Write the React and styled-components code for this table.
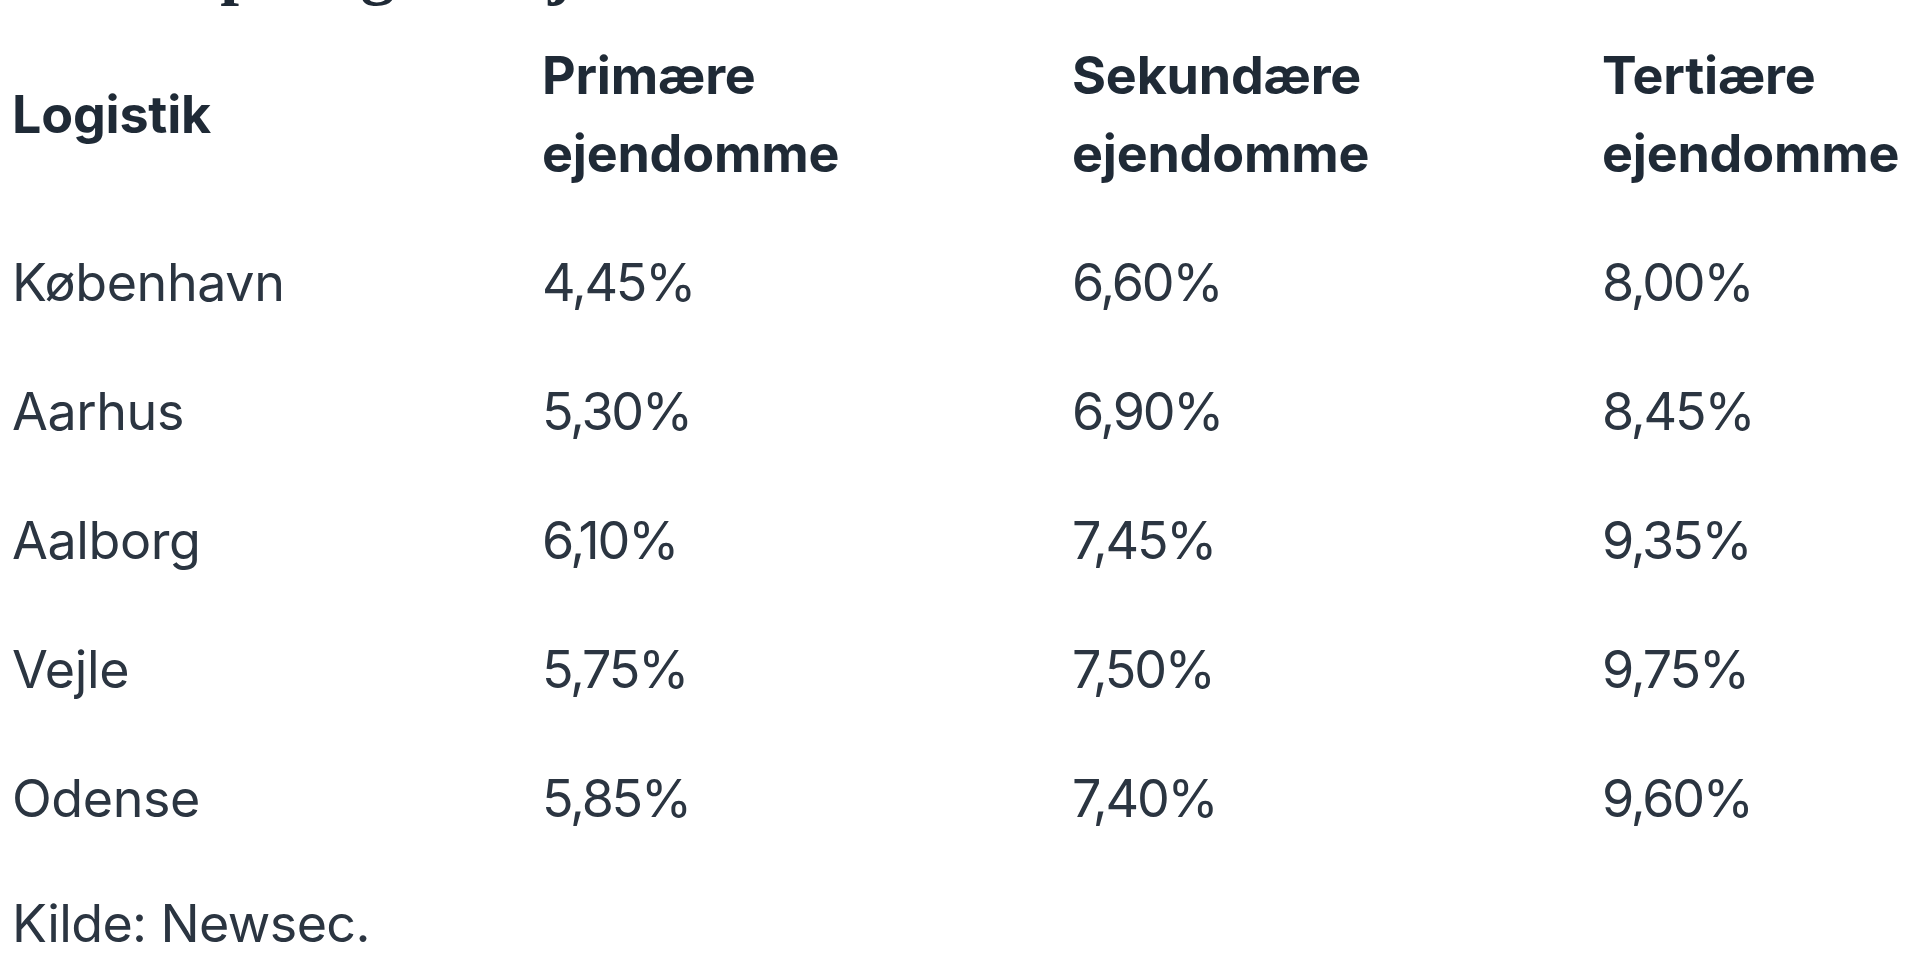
import React from 'react'
import styled, { createGlobalStyle } from 'styled-components'

const GlobalStyle = createGlobalStyle`
  html, body {
    margin: 0;
    padding: 0;
    background: #ffffff;
    overflow: hidden;
  }
`

const Page = styled.main`
  width: 1920px;
  height: 979px;
  overflow: hidden;
  font-family: Inter, 'Noto Sans', sans-serif;
  color: #2b3541;
`

const Heading = styled.h2`
  margin: -64px 0 7.5px 12px;
  font-family: 'Liberation Serif', 'Times New Roman', serif;
  font-weight: 700;
  font-size: 67.5px;
  line-height: 67.5px;
  color: #1f2a36;
  white-space: nowrap;
`

const Table = styled.table`
  border-collapse: collapse;
  table-layout: fixed;
  width: 2120px;
  font-size: 52px;
  line-height: 78px;

  col {
    width: 530px;
  }
`

const HeadCell = styled.th`
  padding: 25.5px 12px;
  text-align: left;
  vertical-align: middle;
  font-weight: 700;
  letter-spacing: -0.2px;
  color: #1f2a36;
`

const Cell = styled.td`
  padding: 25.5px 12px;
  text-align: left;
  vertical-align: middle;
  font-weight: 400;
  white-space: nowrap;
  letter-spacing: ${(p) => (p.$numeric ? '-2.2px' : '-0.4px')};
`

const Source = styled.p`
  margin: 22px 0 0 12px;
  font-size: 52px;
  line-height: 78px;
  letter-spacing: -0.6px;
`

const columns = [
  ['Logistik'],
  ['Primære', 'ejendomme'],
  ['Sekundære', 'ejendomme'],
  ['Tertiære', 'ejendomme'],
]

const rows = [
  ['København', '4,45%', '6,60%', '8,00%'],
  ['Aarhus', '5,30%', '6,90%', '8,45%'],
  ['Aalborg', '6,10%', '7,45%', '9,35%'],
  ['Vejle', '5,75%', '7,50%', '9,75%'],
  ['Odense', '5,85%', '7,40%', '9,60%'],
]

export default function App() {
  return (
    <Page>
      <GlobalStyle />
      <Heading>Afkast på logistikejendomme</Heading>
      <Table>
        <colgroup>
          {columns.map((c, i) => <col key={i} />)}
        </colgroup>
        <thead>
          <tr>
            {columns.map((lines, i) => (
              <HeadCell key={i}>
                {lines.map((l, j) => (
                  <React.Fragment key={j}>
                    {j > 0 && <br />}
                    {l}
                  </React.Fragment>
                ))}
              </HeadCell>
            ))}
          </tr>
        </thead>
        <tbody>
          {rows.map((row) => (
            <tr key={row[0]}>
              {row.map((v, i) => <Cell key={i} $numeric={i > 0}>{v}</Cell>)}
            </tr>
          ))}
        </tbody>
      </Table>
      <Source>Kilde: Newsec.</Source>
    </Page>
  )
}
